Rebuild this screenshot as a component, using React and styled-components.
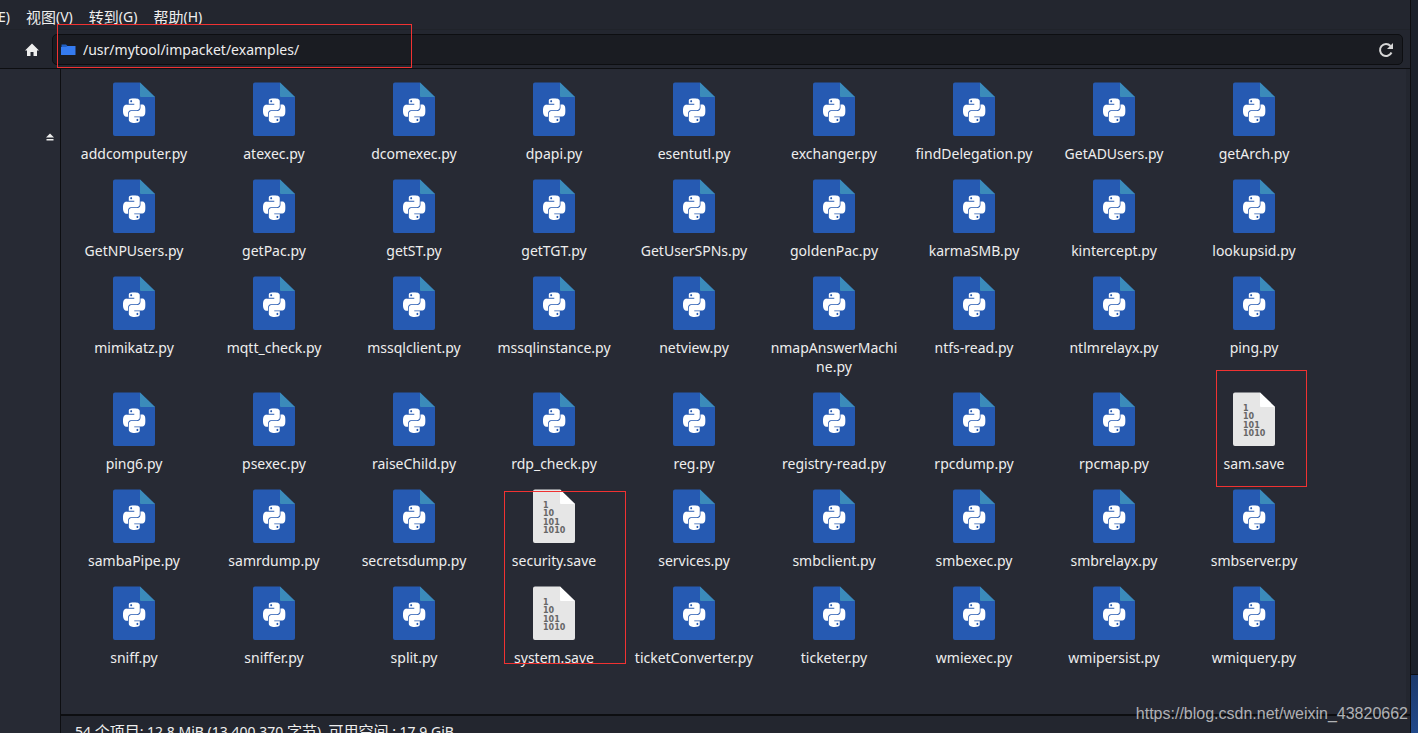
import React, { useState } from "react";
import styled, { createGlobalStyle, css } from "styled-components";
import { SiPython } from "react-icons/si";

const GlobalStyle = createGlobalStyle`
  * { box-sizing: border-box; }
  body {
    margin: 0;
    overflow: hidden;
    background: #1c212b;
    color: #eeeeee;
    font-family: "Noto Sans", "Noto Sans CJK SC", sans-serif;
    font-size: 14px;
  }
  button, input {
    font: inherit;
    color: inherit;
    background: none;
    border: none;
    padding: 0;
    margin: 0;
  }
  input:focus { outline: none; }
`;

const Desktop = styled.div`
  position: relative;
  display: flex;
  height: 100vh;
`;

const Window = styled.div`
  flex: 1;
  min-width: 0;
  display: flex;
  flex-direction: column;
  background: #23262f;
  border-right: 1px solid #0d0e11;
`;

const DesktopEdge = styled.div`
  flex: 0 0 7px;
  display: flex;
  flex-direction: column;
  justify-content: flex-end;
  background: #1c212b;
`;

const BackWindow = styled.div`
  height: 59px;
  border-top: 1px solid #0d0e11;
  background: linear-gradient(#1c3a6c, #22498a);
`;

const MenuBar = styled.nav`
  display: flex;
  gap: 16px;
  height: 29px;
  padding-top: 5px;
  flex: none;
`;

const MenuButton = styled.button`
  display: flex;
  justify-content: flex-end;
  white-space: nowrap;
  line-height: 24px;
  ${(p) => p.$cut && css`
    width: 10px;
    overflow: hidden;
  `}
`;

// Chinese glyphs sit one step larger than the latin ones
const Han = styled.span`
  font-size: 15px;
`;

const ToolBar = styled.div`
  display: flex;
  align-items: center;
  flex: none;
  height: 40px;
  padding: 1px 7px 0 24px;
  border-top: 1px solid #20232a;
  border-bottom: 1px solid #0d0e11;
`;

const IconButton = styled.button`
  display: flex;
  align-items: center;
  justify-content: center;
  flex: none;
  width: 16px;
  height: 16px;
`;

const PathBar = styled.div`
  position: relative;
  display: flex;
  align-items: center;
  flex: 1;
  gap: 7px;
  height: 31px;
  margin-left: 12px;
  padding: 0 8px;
  background: #1a1c22;
  border: 1px solid #0d0e11;
  border-radius: 5px;
`;

const PathInput = styled.input`
  flex: 1;
  min-width: 0;
  height: 24px;
`;

const Marker = styled.span`
  position: absolute;
  pointer-events: none;
  z-index: 1;
  border: 1px solid #f03232;
  left: ${(p) => p.$left}px;
  top: ${(p) => p.$top}px;
  width: ${(p) => p.$width}px;
  height: ${(p) => p.$height}px;
`;

const Body = styled.div`
  flex: 1;
  min-height: 0;
  display: flex;
`;

const SideBar = styled.aside`
  display: flex;
  flex: none;
  justify-content: flex-end;
  align-items: flex-start;
  width: 61px;
  padding: 60px 2px 0 0;
  background: #272a34;
  border-right: 1px solid #0d0e11;
`;

const Main = styled.main`
  flex: 1;
  min-width: 0;
  display: flex;
  flex-direction: column;
`;

const FileGrid = styled.div`
  flex: 1;
  display: grid;
  grid-template-columns: repeat(auto-fill, 140px);
  align-content: start;
  row-gap: 16px;
  margin-right: 4px;
  padding: 13px 0 0 3px;
  background: #272a34;
`;

const FileItem = styled.button`
  position: relative;
  display: flex;
  flex-direction: column;
  align-items: center;
  justify-content: flex-start;
  gap: 8px;
`;

const FileName = styled.span`
  width: 130px;
  line-height: 19px;
  word-break: break-all;
  text-align: center;
`;

const StatusBar = styled.footer`
  flex: none;
  height: 19px;
  padding: 3px 14px 0;
  overflow: hidden;
  white-space: nowrap;
  border-top: 2px solid #0d0e11;
  line-height: 24px;
`;

const Watermark = styled.span`
  position: absolute;
  right: 10px;
  bottom: 8px;
  color: #b0b1b4;
  font-family: "Liberation Sans", Arial, sans-serif;
  font-size: 16px;
  line-height: 22px;
`;

const menus = [
  { label: "编辑", key: "(E)" },
  { label: "视图", key: "(V)" },
  { label: "转到", key: "(G)" },
  { label: "帮助", key: "(H)" },
];

const files = [
  "addcomputer.py", "atexec.py", "dcomexec.py", "dpapi.py", "esentutl.py",
  "exchanger.py", "findDelegation.py", "GetADUsers.py", "getArch.py",
  "GetNPUsers.py", "getPac.py", "getST.py", "getTGT.py", "GetUserSPNs.py",
  "goldenPac.py", "karmaSMB.py", "kintercept.py", "lookupsid.py",
  "mimikatz.py", "mqtt_check.py", "mssqlclient.py", "mssqlinstance.py", "netview.py",
  "nmapAnswerMachine.py", "ntfs-read.py", "ntlmrelayx.py", "ping.py",
  "ping6.py", "psexec.py", "raiseChild.py", "rdp_check.py", "reg.py",
  "registry-read.py", "rpcdump.py", "rpcmap.py", "sam.save",
  "sambaPipe.py", "samrdump.py", "secretsdump.py", "security.save", "services.py",
  "smbclient.py", "smbexec.py", "smbrelayx.py", "smbserver.py",
  "sniff.py", "sniffer.py", "split.py", "system.save", "ticketConverter.py",
  "ticketer.py", "wmiexec.py", "wmipersist.py", "wmiquery.py",
];

// red frames, measured from the item they start on
const markers = {
  "sam.save": { $left: 32, $top: -22, $width: 91, $height: 117 },
  "security.save": { $left: 20, $top: 2, $width: 122, $height: 173 },
};

function PythonIcon() {
  return (
    <svg width="42" height="54" viewBox="0 0 42 54" aria-hidden="true">
      <path d="M2 0.5H27L42 15V52a2 2 0 0 1-2 2H2a2 2 0 0 1-2-2V2.5a2 2 0 0 1 2-2z" fill="#265ab2" />
      <path d="M27 0.5L42 15H28a1 1 0 0 1-1-1z" fill="#3b8bba" />
      <g transform="translate(10 16.2) scale(0.94 1.03)">
        <SiPython size={24} color="#ffffff" />
      </g>
    </svg>
  );
}

function BinaryIcon() {
  return (
    <svg width="42" height="54" viewBox="0 0 42 54" aria-hidden="true">
      <path d="M2 0.5H27L42 15V52a2 2 0 0 1-2 2H2a2 2 0 0 1-2-2V2.5a2 2 0 0 1 2-2z" fill="#e6e6e6" />
      <path d="M27 0.5L42 15H28a1 1 0 0 1-1-1z" fill="#ffffff" />
      <g fill="#666666" fontFamily="DejaVu Sans, sans-serif" fontWeight="bold" fontSize="8">
        <text x="10" y="19">1</text>
        <text x="10" y="27">10</text>
        <text x="10" y="36">101</text>
        <text x="10" y="44">1010</text>
      </g>
    </svg>
  );
}

function HomeIcon() {
  return (
    <svg width="14" height="14" viewBox="0 0 14 14" aria-hidden="true">
      <path d="M7 0.5L0 7.5h2V13h3.500V9h3v4H12V7.500h2z" fill="#eeeeee" />
    </svg>
  );
}

function FolderIcon() {
  return (
    <svg width="15" height="12" viewBox="0 0 15 12" aria-hidden="true">
      <path d="M0.5 0.5H5l1.500 1.500H14V4H0.5z" fill="#2160c4" />
      <path d="M0 3h5l1.500-1H14.500V10.500a.5.5 0 0 1-.5.5H.5a.5.5 0 0 1-.5-.5z" fill="#357bf0" />
    </svg>
  );
}

function ReloadIcon() {
  return (
    <svg width="16" height="16" viewBox="0 0 16 16" aria-hidden="true">
      <path d="M12.500 4A6 6 0 1 0 13.500 10.500" fill="none" stroke="#d6d6d6" strokeWidth="2" />
      <path d="M15 1V7H9z" fill="#d6d6d6" />
    </svg>
  );
}

function EjectIcon() {
  return (
    <svg width="8" height="8" viewBox="0 0 8 8" aria-hidden="true">
      <path d="M4 0.5L8 4.500H0zM0.5 6h7v1.500h-7z" fill="#eeeeee" />
    </svg>
  );
}

export default function App() {
  const [path, setPath] = useState("/usr/mytool/impacket/examples/");

  return (
    <>
      <GlobalStyle />
      <Desktop>
        <Window>
          <MenuBar>
            {menus.map((m, i) => (
              <MenuButton key={m.key} $cut={i === 0}>
                <Han>{m.label}</Han>{m.key}
              </MenuButton>
            ))}
          </MenuBar>
          <ToolBar>
            <IconButton aria-label="Home"><HomeIcon /></IconButton>
            <PathBar>
              <FolderIcon />
              <PathInput
                aria-label="Path"
                value={path}
                onChange={(e) => setPath(e.target.value)}
              />
              <IconButton aria-label="Reload"><ReloadIcon /></IconButton>
              <Marker $left={4} $top={-11} $width={355} $height={44} />
            </PathBar>
          </ToolBar>
          <Body>
            <SideBar>
              <IconButton aria-label="Eject"><EjectIcon /></IconButton>
            </SideBar>
            <Main>
              <FileGrid>
                {files.map((name) => (
                  <FileItem key={name}>
                    {name.endsWith(".py") ? <PythonIcon /> : <BinaryIcon />}
                    <FileName>{name}</FileName>
                    {markers[name] && <Marker {...markers[name]} />}
                  </FileItem>
                ))}
              </FileGrid>
              <StatusBar>
                54 <Han>个项目</Han>: 12.8 MiB (13,400,370 <Han>字节</Han>), <Han>可用空间</Han> : 17.9 GiB
              </StatusBar>
            </Main>
          </Body>
        </Window>
        <DesktopEdge>
          <BackWindow />
        </DesktopEdge>
        <Watermark>https://blog.csdn.net/weixin_43820662</Watermark>
      </Desktop>
    </>
  );
}
